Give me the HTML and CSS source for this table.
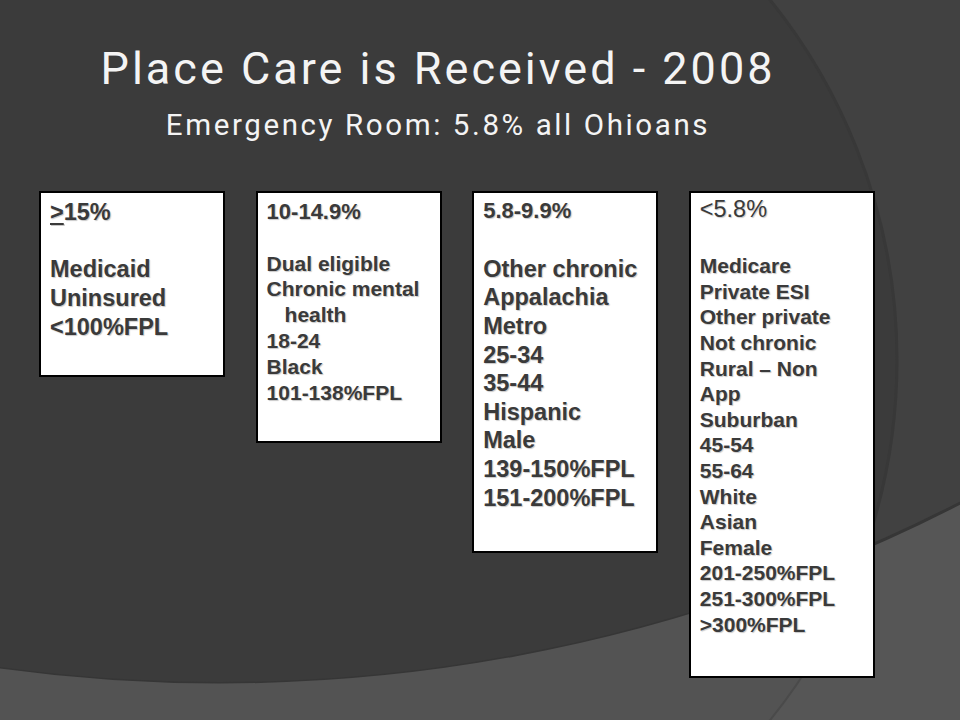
FILE: index.html
```html
<!DOCTYPE html>
<html lang="en">
<head>
<meta charset="utf-8">
<title>Place Care is Received - 2008</title>
<link rel="stylesheet" href="styles.css">
</head>
<body>
<div class="slide">
  <svg class="bg" viewBox="0 0 960 720" width="960" height="720" aria-hidden="true">
    <defs>
      <clipPath id="c2clip"><circle cx="220" cy="-938" r="1620"/></clipPath>
    </defs>
    <rect width="960" height="720" fill="#565656"/>
    <circle cx="323" cy="360" r="574" fill="#535353" stroke="#4a4a4a" stroke-width="2"/>
    <circle cx="220" cy="-938" r="1620" fill="#414141" stroke="#363636" stroke-width="3"/>
    <circle cx="323" cy="360" r="574" fill="#3b3b3b" stroke="#383838" stroke-width="3" clip-path="url(#c2clip)"/>
  </svg>

  <header class="header">
    <h1 class="title">Place Care is Received - 2008</h1>
    <p class="subtitle">Emergency Room: 5.8% all Ohioans</p>
  </header>

  <main class="boxes">
    <section class="box b1">
      <div class="head"><span class="ul">&gt;</span>15%</div>
      <ul class="items">
        <li>Medicaid</li>
        <li>Uninsured</li>
        <li>&lt;100%FPL</li>
      </ul>
    </section>

    <section class="box b2">
      <div class="head">10-14.9%</div>
      <ul class="items">
        <li>Dual eligible</li>
        <li class="hang">Chronic mental health</li>
        <li>18-24</li>
        <li>Black</li>
        <li>101-138%FPL</li>
      </ul>
    </section>

    <section class="box b3">
      <div class="head">5.8-9.9%</div>
      <ul class="items">
        <li>Other chronic</li>
        <li>Appalachia</li>
        <li>Metro</li>
        <li>25-34</li>
        <li>35-44</li>
        <li>Hispanic</li>
        <li>Male</li>
        <li>139-150%FPL</li>
        <li>151-200%FPL</li>
      </ul>
    </section>

    <section class="box b4">
      <div class="head">&lt;5.8%</div>
      <ul class="items">
        <li>Medicare</li>
        <li>Private ESI</li>
        <li>Other private</li>
        <li>Not chronic</li>
        <li>Rural – Non<br>App</li>
        <li>Suburban</li>
        <li>45-54</li>
        <li>55-64</li>
        <li>White</li>
        <li>Asian</li>
        <li>Female</li>
        <li>201-250%FPL</li>
        <li>251-300%FPL</li>
        <li>&gt;300%FPL</li>
      </ul>
    </section>
  </main>
</div>
</body>
</html>
```

FILE: styles.css
```css
* { box-sizing: border-box; }

html, body {
  margin: 0;
  padding: 0;
  background: #3b3b3b;
}

.slide {
  position: relative;
  width: 960px;
  height: 720px;
  overflow: hidden;
  background: #3b3b3b;
}

.bg {
  position: absolute;
  left: 0;
  top: 0;
  z-index: 0;
  display: block;
}

.header {
  position: relative;
  z-index: 1;
  width: 876px;
  padding-top: 42px;
  text-align: center;
  color: #f4f4f4;
  font-family: Roboto, "Liberation Sans", sans-serif;
  font-weight: 400;
}

.title {
  margin: 0;
  font-size: 45px;
  line-height: 54px;
  font-weight: 400;
  letter-spacing: 3px;
}

.subtitle {
  margin: 11px 0 0;
  font-size: 29.5px;
  line-height: 36px;
  letter-spacing: 2.6px;
}

.boxes {
  position: relative;
  z-index: 1;
  display: flex;
  align-items: flex-start;
  gap: 30.6px;
  padding-left: 39px;
  margin-top: 48px;
}

.box {
  width: 186px;
  background: #fff;
  border: 2px solid #000;
  padding: 4px 6px 36px 9px;
  font-family: "Liberation Sans", Arial, sans-serif;
  font-weight: 700;
  color: #3a3a3a;
  text-shadow: 1px 1px 1px rgba(0, 0, 0, 0.22);
}

.head {
  white-space: nowrap;
}

.ul {
  text-decoration: underline;
  text-decoration-thickness: 2px;
  text-underline-offset: 3px;
}

.items {
  list-style: none;
  margin: 0;
  padding: 0;
}

.hang {
  padding-left: 18px;
  text-indent: -18px;
}

/* box 1 */
.b1 { padding-top: 4.5px; padding-bottom: 33.5px; }
.b1 .head { font-size: 23.5px; line-height: 28.8px; }
.b1 .items { font-size: 23.5px; line-height: 28.8px; margin-top: 29px; }

/* box 2 */
.b2 { padding-top: 6px; padding-bottom: 36px; }
.b2 .head { font-size: 22px; line-height: 25.8px; }
.b2 .items { font-size: 21px; line-height: 25.8px; margin-top: 25.8px; }

/* box 3 */
.b3 { padding-top: 4.4px; padding-bottom: 38.5px; }
.b3 .head { font-size: 22px; line-height: 28.6px; }
.b3 .items { font-size: 23.5px; line-height: 28.6px; margin-top: 28.9px; }

/* box 4 */
.b4 { padding-top: 2px; padding-bottom: 38.5px; }
.b4 .head { font-size: 23.5px; line-height: 28px; font-weight: 400; }
.b4 .items { font-size: 21px; line-height: 25.6px; margin-top: 30.3px; }
```
